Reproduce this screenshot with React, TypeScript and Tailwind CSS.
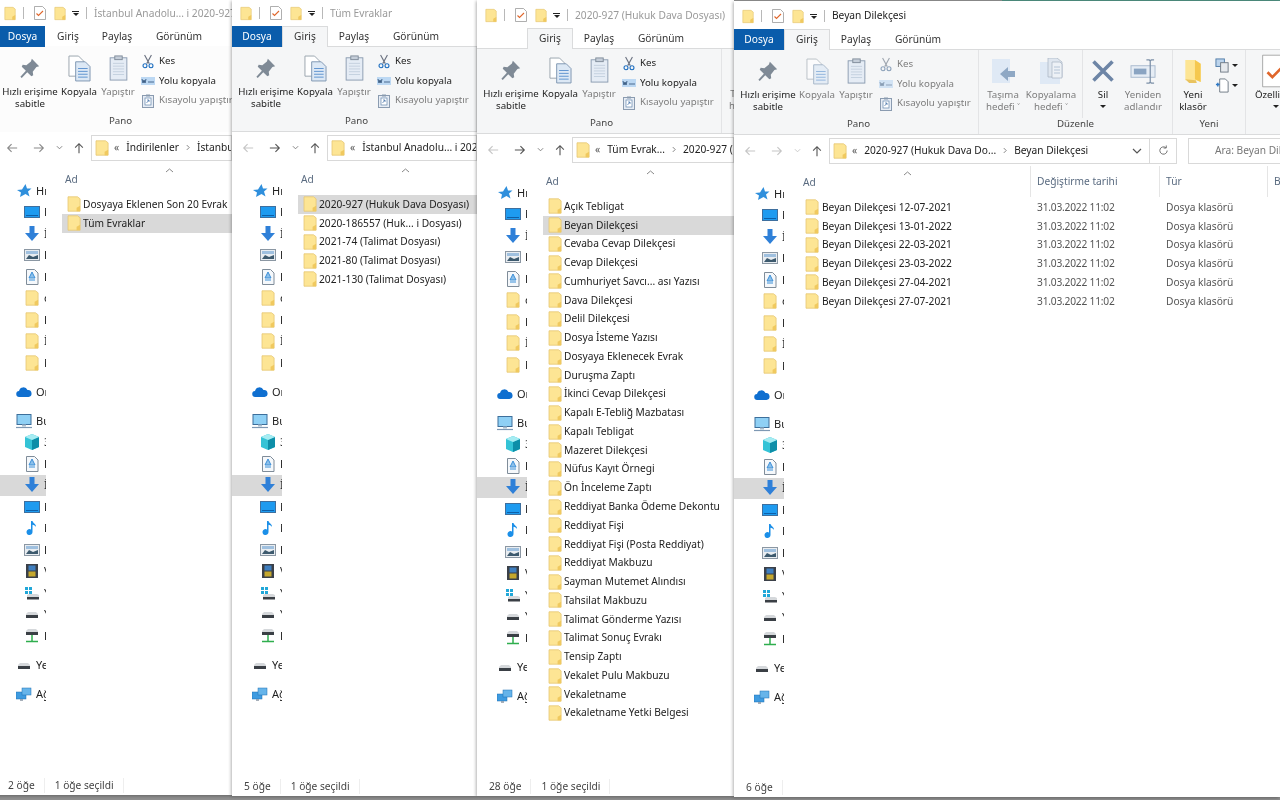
import type { ReactNode } from "react";

const font = { fontFamily: '"Noto Sans", "Open Sans", sans-serif' };

function Folder({ className = "w-[14px] h-[16px]" }: { className?: string }) {
  return (
    <svg viewBox="0 0 14 16" className={`shrink-0 ${className}`}>
      <path d="M1 .8h9.500l2.600 2v12.400H1z" fill="#fde594" stroke="#e6c774" strokeWidth=".8" />
      <path d="M9.600 15.200v-3.400l3.500-2v5.400z" fill="#f0c95f" />
    </svg>
  );
}

function Pin() {
  return (
    <svg viewBox="0 0 24 24" className="w-[22px] h-[22px]">
      <path d="M14 2l8 8-3 1-4 5 .5 4-2 1-4.500-4.500L3 23l-1.500-1.500L7.500 15 3 10.500l1-2 4 .5 5-4z" fill="#7f8a96" />
    </svg>
  );
}

function CopyIcon({ on }: { on: boolean }) {
  return (
    <svg viewBox="0 0 24 28" className="w-[23px] h-[27px]" opacity={on ? 1 : 0.65}>
      <path d="M1 1h10l5 5v16H1z" fill="#fff" stroke="#9aa4ad" />
      <path d="M8 7h10l5 5v15H8z" fill="#dce8f5" stroke="#7f97b2" />
      <path d="M10.500 14h10M10.500 17h10M10.500 20h10M10.500 23h10" stroke="#5d92cf" />
    </svg>
  );
}

function PasteIcon() {
  return (
    <svg viewBox="0 0 20 28" className="w-[19px] h-[26px]">
      <rect x="1" y="3" width="18" height="24" fill="#e5ecf5" stroke="#8a9bb0" />
      <rect x="6" y="1" width="8" height="4" fill="#c5ced9" stroke="#7f8b99" />
      <path d="M4 9h12M4 12h12M4 15h12M4 18h12M4 21h12" stroke="#c3cfdd" />
    </svg>
  );
}

function Scissors({ on }: { on: boolean }) {
  const c = on ? "#1f6fc0" : "#8da2ba";
  return (
    <svg viewBox="0 0 14 17" className="w-[12px] h-[15px] shrink-0">
      <path d="M3 1l5.500 10M11 1L5.500 11" stroke={on ? "#6b7280" : "#a0a7b0"} strokeWidth="1.300" fill="none" />
      <circle cx="3.500" cy="13.500" r="2.300" stroke={c} strokeWidth="1.300" fill="none" />
      <circle cx="10.500" cy="13.500" r="2.300" stroke={c} strokeWidth="1.300" fill="none" />
    </svg>
  );
}

function PathIcon({ on }: { on: boolean }) {
  return (
    <svg viewBox="0 0 14 8" className="w-[14px] h-[8px] shrink-0" opacity={on ? 1 : 0.6}>
      <rect width="14" height="8" fill="#bcd8f3" />
      <path d="M1 2l1 4 1-3 1 3 1-4" stroke="#24466f" strokeWidth=".8" fill="none" />
      <path d="M7 5h6" stroke="#4a6a90" />
    </svg>
  );
}

function ShortcutIcon() {
  return (
    <svg viewBox="0 0 12 14" className="w-[12px] h-[14px] shrink-0">
      <rect x=".5" y="1.500" width="11" height="12" fill="#e7edf5" stroke="#8a9bb0" />
      <rect x="3" y="4" width="6" height="7" fill="#fff" stroke="#6486ad" strokeWidth=".7" />
      <path d="M4.500 9l2.500-3M5 6h2v2" stroke="#3d6da8" strokeWidth=".7" fill="none" />
      <rect x="4" y=".5" width="4" height="2" fill="#8a9bb0" />
    </svg>
  );
}

function MoveIcon() {
  return (
    <svg viewBox="0 0 24 27" className="w-[24px] h-[27px]">
      <path d="M1 1h18v24H1z" fill="#dfe9f5" />
      <path d="M9 16l8-7v4h7v6h-7v4z" fill="#8fa8c4" />
    </svg>
  );
}

function CopyToIcon() {
  return (
    <svg viewBox="0 0 24 27" className="w-[24px] h-[27px]">
      <path d="M1 4h20v22H1z" fill="#dfe9f5" />
      <path d="M9 0h9l5 4v15H9z" fill="#dfe6ef" stroke="#a6b3c2" strokeWidth=".7" />
      <path d="M13 4h8l2 2v14H13z" fill="#edf1f6" stroke="#a6b3c2" strokeWidth=".7" />
      <path d="M15 9h6M15 12h6M15 15h6" stroke="#b5c4d6" />
    </svg>
  );
}

function DeleteIcon() {
  return (
    <svg viewBox="0 0 24 24" className="w-[24px] h-[24px]">
      <path d="M2.500 2.500l19 19M21.500 2.500l-19 19" stroke="#6d85a6" strokeWidth="3.600" />
    </svg>
  );
}

function RenameIcon() {
  return (
    <svg viewBox="0 0 28 26" className="w-[27px] h-[25px]">
      <rect x="1" y="7" width="25" height="12" fill="#e6edf5" stroke="#a9bace" />
      <rect x="4" y="10" width="13" height="6" fill="#8aa4c2" />
      <path d="M17 1h3l1 1 1-1h3M21 2v22M17 25h3l1-1 1 1h3" stroke="#7c90a8" strokeWidth="1.300" fill="none" />
    </svg>
  );
}

function NewFolderIcon() {
  return (
    <svg viewBox="0 0 18 26" className="w-[18px] h-[25px]">
      <path d="M1 1h10l6 4v19l-5-2-11 0z" fill="#fde594" />
      <path d="M11 1l6 4v19l-6-3z" fill="#f5c84f" />
      <path d="M1 21l4 4h8l-1-3z" fill="#e9c35f" />
    </svg>
  );
}

function Caret() {
  return <span className="block w-0 h-0 border-x-[3px] border-x-transparent border-t-[3px] border-t-[#222]" />;
}

function SmallNew({ doc }: { doc?: boolean }) {
  return (
    <span className="flex items-center gap-[2px]">
      <svg viewBox="0 0 16 16" className="w-[15px] h-[15px]">
        {doc ? (
          <>
            <path d="M5 1h6l3 3v11H5z" fill="#fff" stroke="#6f7a85" />
            <path d="M1 7h4M3 5v4" stroke="#2f78c4" strokeWidth="1.500" />
          </>
        ) : (
          <>
            <rect x="1" y="1" width="9" height="8" fill="#bcd4ec" stroke="#4f7ba8" />
            <rect x="6" y="5" width="8" height="10" fill="#e6e9ed" stroke="#6f7a85" />
          </>
        )}
      </svg>
      <Caret />
    </span>
  );
}

function CheckDoc({ small }: { small?: boolean }) {
  return (
    <svg viewBox="0 0 12 14" className={`shrink-0 ${small ? "w-[12px] h-[14px]" : "w-[30px] h-[34px]"}`}>
      <path d="M.5.5h8l3 3v10H.5z" fill="#fff" stroke="#8c8c8c" strokeWidth={small ? 0.7 : 0.3} />
      <path d="M2.500 7.500l2 2 4.500-4.500" stroke="#e0662b" strokeWidth="1.100" fill="none" />
    </svg>
  );
}

function Arrow({ dir, color }: { dir: "left" | "right" | "up"; color: string }) {
  const rot = dir === "left" ? "" : dir === "right" ? "rotate-180" : "rotate-90";
  return (
    <svg viewBox="0 0 14 12" className={`w-[13px] h-[12px] ${rot}`}>
      <path d="M13 6H2M6.500 1.500L2 6l4.500 4.500" stroke={color} strokeWidth="1.300" fill="none" />
    </svg>
  );
}

type Nav = "star" | "desktop" | "down" | "pics" | "doc" | "folder" | "cloud" | "pc" | "cube" | "music" | "video" | "win" | "drive" | "netdrive" | "net";

function NavIcon({ kind }: { kind: Nav }) {
  if (kind === "folder") return <Folder />;
  return (
    <svg viewBox="0 0 16 16" className="w-[16px] h-[16px]">
      {kind === "star" && <path d="M9.500 1l1.500 4.500h4.500l-3.500 3 1.500 5-4-2.500L4 14l1-4.500L1 7l5-.5z" fill="#2f8fdc" />}
      {kind === "desktop" && (
        <>
          <rect x=".5" y="2.500" width="15" height="11" fill="#1e9bf0" stroke="#3e6f9e" />
          <path d="M2 11.500h12" stroke="#0d5fa8" />
        </>
      )}
      {kind === "down" && <path d="M5.500 0h5v7H15l-7 8-7-8h4.500z" fill="#2f80d8" />}
      {kind === "pics" && (
        <>
          <rect x=".5" y="2.500" width="15" height="11" fill="#e9edf1" stroke="#8b97a3" />
          <rect x="2" y="4" width="12" height="3" fill="#9fc0df" />
          <path d="M2 12l3-4 4 2 5-2v4z" fill="#3d5a6e" />
        </>
      )}
      {kind === "doc" && (
        <>
          <path d="M2.500.5h8l3.500 3.500v11.500H2.500z" fill="#f5f8fb" stroke="#7f8c99" />
          <path d="M8 3L5 9h6zM5 11h6" stroke="#3b8fd8" fill="#8cc0ea" />
        </>
      )}
      {kind === "cloud" && <path d="M3.500 13a3 3 0 01-.5-6 4.500 4.500 0 018.500-1 3.500 3.500 0 011 7z" fill="#0f6fd0" />}
      {kind === "pc" && (
        <>
          <rect x="1" y="1.500" width="14" height="10" fill="#8fd0f5" stroke="#3d6f9b" />
          <path d="M0 14.500h16" stroke="#7e98b3" strokeWidth="1.200" />
          <path d="M6 11.500h4v2H6z" fill="#a9bccd" />
        </>
      )}
      {kind === "cube" && (
        <>
          <path d="M8 0l7 3v10l-7 3-7-3V3z" fill="#34c3d6" />
          <path d="M8 6l7-3v10l-7 3z" fill="#0d8ea8" />
          <path d="M8 6L1 3l7-3 7 3z" fill="#a6ecf2" />
        </>
      )}
      {kind === "music" && <path d="M7 1h1.500c.5 2.500 4 3 3.500 6-.8-1.500-2-2-3.500-2.300V12a3 3 0 11-1.500-2.500z" fill="#1b8fe8" />}
      {kind === "video" && (
        <>
          <rect x="2" y="1" width="12" height="14" fill="#3b4048" />
          <rect x="4.500" y="2.500" width="7" height="5" fill="#3f7fc0" />
          <rect x="4.500" y="8.500" width="7" height="5" fill="#c5a82e" />
        </>
      )}
      {kind === "win" && (
        <>
          <path d="M1 2h3v3H1zM5 2h3v3H5zM1 6h3v3H1zM5 6h3v3H5z" fill="#21a7d8" />
          <path d="M3 10l2-1h8l2 1v4H3z" fill="#d5d8db" />
          <rect x="3" y="12" width="12" height="2.500" fill="#3a3f45" />
        </>
      )}
      {kind === "drive" && (
        <>
          <path d="M2 8l2-2h8l2 2v3H2z" fill="#d5d8db" />
          <rect x="2" y="9" width="12" height="3" fill="#3a3f45" />
        </>
      )}
      {kind === "netdrive" && (
        <>
          <path d="M2 3l2-2h8l2 2v3H2z" fill="#d5d8db" />
          <rect x="2" y="4" width="12" height="3" fill="#3a3f45" />
          <path d="M8 7v6M2 13.500h12" stroke="#2fae4e" strokeWidth="1.500" />
        </>
      )}
      {kind === "net" && (
        <>
          <rect x="0" y="6" width="10" height="7" fill="#3e9be0" stroke="#1f6fb3" strokeWidth=".5" />
          <rect x="6" y="2" width="9" height="7" fill="#66b4ea" stroke="#1f6fb3" strokeWidth=".5" />
          <path d="M4 14h3" stroke="#8a96a3" strokeWidth="1.500" />
        </>
      )}
    </svg>
  );
}

const navRows: { kind: Nav; label: string; top?: boolean; gap?: boolean; sel?: boolean }[] = [
  { kind: "star", label: "Hızlı", top: true },
  { kind: "desktop", label: "Masaüstü" },
  { kind: "down", label: "İndirilenler" },
  { kind: "pics", label: "Resimler" },
  { kind: "doc", label: "Belgeler" },
  { kind: "folder", label: "dosya" },
  { kind: "folder", label: "Dava" },
  { kind: "folder", label: "İcra" },
  { kind: "folder", label: "Notlar" },
  { kind: "cloud", label: "OneDrive", top: true, gap: true },
  { kind: "pc", label: "Bu bilgisayar", top: true, gap: true },
  { kind: "cube", label: "3B Nesneler" },
  { kind: "doc", label: "Belgeler" },
  { kind: "down", label: "İndirilenler", sel: true },
  { kind: "desktop", label: "Masaüstü" },
  { kind: "music", label: "Müzik" },
  { kind: "pics", label: "Resimler" },
  { kind: "video", label: "Videolar" },
  { kind: "win", label: "Yerel Disk" },
  { kind: "drive", label: "Yeni Birim" },
  { kind: "netdrive", label: "Evrak" },
  { kind: "drive", label: "Yeni Birim", top: true, gap: true },
  { kind: "net", label: "Ağ", top: true, gap: true },
];

function BigButton({ icon, lines, dim, caret }: { icon: ReactNode; lines: string[]; dim?: boolean; caret?: boolean }) {
  return (
    <div className={`w-full flex flex-col items-center text-center leading-[12px] ${dim ? "text-[#7d7d7d]" : "text-[#222]"}`}>
      <div className="h-[32px] mb-[2px] flex items-center justify-center">{icon}</div>
      {lines.map((l) => (
        <span key={l} className="whitespace-nowrap">{l}</span>
      ))}
      {caret && <span className="mt-[4px]"><Caret /></span>}
    </div>
  );
}

function SmallButton({ icon, label, dim }: { icon: ReactNode; label: string; dim?: boolean }) {
  return (
    <div className={`h-[19.500px] flex items-center gap-[4px] whitespace-nowrap ${dim ? "text-[#7d7d7d]" : "text-[#222]"}`}>
      <span className="w-[15px] flex justify-center shrink-0">{icon}</span>
      {label}
    </div>
  );
}

function Group({ label, className, children }: { label: string; className: string; children: ReactNode }) {
  return (
    <div className={`h-full shrink-0 flex flex-col border-r border-[#e3e4e6] ${className}`}>
      <div className="flex-1 flex min-h-0">{children}</div>
      <div className="h-[14px] mb-[3px] leading-[14px] text-center text-[#444]">{label}</div>
    </div>
  );
}

type Win = {
  place: string;
  pad: string;
  title: string;
  titleDim: boolean;
  dosya: boolean;
  dosyaWidth: string;
  tabStyle: string;
  ribbon: string;
  live: boolean;
  back: string;
  forward: string;
  crumbs: string[];
  rows: string[];
  selected: number;
  count: string;
  full?: boolean;
};

const beyan = ["12-07-2021", "13-01-2022", "22-03-2021", "23-03-2022", "27-04-2021", "27-07-2021"];

const windows: Win[] = [
  {
    place: "top-0 left-[-4px] w-[236px] h-[795px] z-10",
    pad: "pt-0",
    title: "İstanbul Anadolu... i 2020-927",
    titleDim: true,
    dosya: true,
    dosyaWidth: "ml-[4px] w-[45px]",
    tabStyle: "border-transparent bg-transparent",
    ribbon: "bg-[#fcfcfc] border-transparent",
    live: true,
    back: "#8a8a8a",
    forward: "#8a8a8a",
    crumbs: ["İndirilenler", "İstanbul Anadolu"],
    rows: ["Dosyaya Eklenen Son 20 Evrak", "Tüm Evraklar"],
    selected: 1,
    count: "2 öğe",
  },
  {
    place: "top-0 left-[232px] w-[245px] h-[796px] z-20",
    pad: "pt-0",
    title: "Tüm Evraklar",
    titleDim: true,
    dosya: true,
    dosyaWidth: "w-[50px]",
    tabStyle: "border-[#dadbdc] bg-[#f5f6f7]",
    ribbon: "bg-[#f5f6f7] border-[#dadbdc]",
    live: true,
    back: "#c5c5c5",
    forward: "#555",
    crumbs: ["İstanbul Anadolu... i 2020-927"],
    rows: ["2020-927 (Hukuk Dava Dosyası)", "2020-186557 (Huk... i Dosyası)", "2021-74 (Talimat Dosyası)", "2021-80 (Talimat Dosyası)", "2021-130 (Talimat Dosyası)"],
    selected: 0,
    count: "5 öğe",
  },
  {
    place: "top-0 left-[477px] w-[257px] h-[796px] z-30",
    pad: "pt-[2px]",
    title: "2020-927 (Hukuk Dava Dosyası)",
    titleDim: true,
    dosya: false,
    dosyaWidth: "w-[50px]",
    tabStyle: "border-[#dadbdc] bg-[#f5f6f7]",
    ribbon: "bg-[#f5f6f7] border-[#dadbdc]",
    live: true,
    back: "#c5c5c5",
    forward: "#555",
    crumbs: ["Tüm Evrak...", "2020-927 (Hukuk"],
    rows: [
      "Açık Tebligat", "Beyan Dilekçesi", "Cevaba Cevap Dilekçesi", "Cevap Dilekçesi", "Cumhuriyet Savcı... ası Yazısı",
      "Dava Dilekçesi", "Delil Dilekçesi", "Dosya İsteme Yazısı", "Dosyaya Eklenecek Evrak", "Duruşma Zaptı",
      "İkinci Cevap Dilekçesi", "Kapalı E-Tebliğ Mazbatası", "Kapalı Tebligat", "Mazeret Dilekçesi", "Nüfus Kayıt Örnegi",
      "Ön İnceleme Zaptı", "Reddiyat Banka Ödeme Dekontu", "Reddiyat Fişi", "Reddiyat Fişi (Posta Reddiyat)", "Reddiyat Makbuzu",
      "Sayman Mutemet Alındısı", "Tahsilat Makbuzu", "Talimat Gönderme Yazısı", "Talimat Sonuç Evrakı", "Tensip Zaptı",
      "Vekalet Pulu Makbuzu", "Vekaletname", "Vekaletname Yetki Belgesi",
    ],
    selected: 1,
    count: "28 öğe",
  },
  {
    place: "top-[1px] left-[734px] w-[546px] h-[796px] z-40",
    pad: "pt-[2px]",
    title: "Beyan Dilekçesi",
    titleDim: false,
    dosya: true,
    dosyaWidth: "w-[50px]",
    tabStyle: "border-[#dadbdc] bg-[#f5f6f7]",
    ribbon: "bg-[#f5f6f7] border-[#dadbdc]",
    live: false,
    back: "#c5c5c5",
    forward: "#c5c5c5",
    crumbs: ["2020-927 (Hukuk Dava Do...", "Beyan Dilekçesi"],
    rows: beyan.map((d) => `Beyan Dilekçesi ${d}`),
    selected: -1,
    count: "6 öğe",
    full: true,
  },
];

function ExplorerWindow({ w }: { w: Win }) {
  return (
    <div className={`absolute bg-white overflow-hidden flex flex-col text-[10.200px] shadow-[-1px_1px_3px_rgba(0,0,0,0.3)] ${w.place} ${w.pad}`}>
      {/* title bar */}
      <div className="h-[26px] shrink-0 flex items-center pl-[8px]">
        <Folder className="w-[12px] h-[15px]" />
        <span className="w-px h-[12px] bg-[#b8b8b8] shrink-0 ml-[7px] mr-[10px]" />
        <CheckDoc small />
        <span className="ml-[8px] shrink-0"><Folder className="w-[12px] h-[15px]" /></span>
        <span className="ml-[6px] shrink-0 flex flex-col items-center gap-[1px]">
          <span className="w-[7px] h-px bg-[#222]" />
          <Caret />
        </span>
        <span className="w-px h-[12px] bg-[#b8b8b8] shrink-0 ml-[7px] mr-[7px]" />
        <span className={`whitespace-nowrap ${w.titleDim ? "text-[#9a9a9a] pt-[1px]" : "text-[#222]"}`}>{w.title}</span>
      </div>
      {/* tabs */}
      <div className="h-[21px] shrink-0 flex text-[#333] relative z-10 -mb-px">
        <div className={`${w.dosyaWidth} flex items-center justify-center ${w.dosya ? "bg-[#0a5cab] text-white" : "text-white"}`}>Dosya</div>
        <div className={`w-[46px] flex items-center justify-center border border-b-0 ${w.tabStyle}`}>Giriş</div>
        <div className="w-[52px] flex items-center justify-center">Paylaş</div>
        <div className="w-[72px] flex items-center justify-center">Görünüm</div>
      </div>
      {/* ribbon */}
      <div className={`h-[86px] shrink-0 flex overflow-hidden border-t border-b text-[9.700px] ${w.ribbon}`}>
        <Group label="Pano" className="w-[245px] pl-[5px]">
          <div className="w-[58px] pt-[5px]"><BigButton icon={<Pin />} lines={["Hızlı erişime", "sabitle"]} /></div>
          <div className="w-[40px] pt-[5px]"><BigButton icon={<CopyIcon on={w.live} />} lines={["Kopyala"]} dim={!w.live} /></div>
          <div className="w-[38px] pt-[5px]"><BigButton icon={<PasteIcon />} lines={["Yapıştır"]} dim /></div>
          <div className="pl-[3px] pt-[5px] flex flex-col">
            <SmallButton icon={<Scissors on={w.live} />} label="Kes" dim={!w.live} />
            <SmallButton icon={<PathIcon on={w.live} />} label="Yolu kopyala" dim={!w.live} />
            <SmallButton icon={<ShortcutIcon />} label="Kısayolu yapıştır" dim />
          </div>
        </Group>
        <Group label="Düzenle" className="w-[194px]">
          <div className="w-[48px] pt-[5px]"><BigButton icon={<MoveIcon />} lines={["Taşıma", "hedefi ˅"]} dim /></div>
          <div className="w-[48px] pt-[5px]"><BigButton icon={<CopyToIcon />} lines={["Kopyalama", "hedefi ˅"]} dim /></div>
          <div className="w-[8px] border-r border-[#e3e4e6] h-[68px]" />
          <div className="w-[40px] pt-[5px]"><BigButton icon={<DeleteIcon />} lines={["Sil"]} caret /></div>
          <div className="w-[40px] pt-[5px]"><BigButton icon={<RenameIcon />} lines={["Yeniden", "adlandır"]} dim /></div>
        </Group>
        <Group label="Yeni" className="w-[73px]">
          <div className="w-[40px] pt-[5px]"><BigButton icon={<NewFolderIcon />} lines={["Yeni", "klasör"]} /></div>
          <div className="pt-[8px] pl-[2px] flex flex-col gap-[5px]">
            <SmallNew />
            <SmallNew doc />
          </div>
        </Group>
        <div className="w-[60px] shrink-0 pt-[5px]"><BigButton icon={<CheckDoc />} lines={["Özellikler"]} caret /></div>
      </div>
      {/* nav */}
      <div className="h-[31px] shrink-0 flex items-center">
        <div className="w-[95px] shrink-0 flex items-center">
          <span className="ml-[10px] w-[12px] flex justify-center"><Arrow dir="left" color={w.back} /></span>
          <span className="ml-[15px] w-[12px] flex justify-center"><Arrow dir="right" color={w.forward} /></span>
          <svg viewBox="0 0 8 5" className="ml-[11px] w-[7px] h-[5px]"><path d="M1 1l3 3 3-3" stroke={w.full ? "#c5c5c5" : "#777"} fill="none" /></svg>
          <span className="ml-[10px] w-[12px] flex justify-center"><Arrow dir="up" color="#555" /></span>
        </div>
        <div className={`h-[26px] border border-[#d9d9d9] flex items-center overflow-hidden min-w-0 ${w.full ? "w-[321px] shrink-0" : "flex-1"}`}>
          <span className="ml-[3px] shrink-0"><Folder /></span>
          <span className="ml-[5px] text-[#555] shrink-0">«</span>
          {w.crumbs.map((c, i) => (
            <span key={c} className="flex items-center shrink-0">
              {i > 0 && (
                <svg viewBox="0 0 5 8" className="mx-[7px] w-[4px] h-[7px]"><path d="M1 1l3 3-3 3" stroke="#666" fill="none" /></svg>
              )}
              <span className={`text-[#222] whitespace-nowrap ${i === 0 ? "ml-[7px]" : ""}`}>{c}</span>
            </span>
          ))}
          {w.full && (
            <svg viewBox="0 0 10 6" className="ml-auto mr-[7px] w-[10px] h-[6px]"><path d="M1 1l4 4 4-4" stroke="#555" strokeWidth="1.200" fill="none" /></svg>
          )}
        </div>
        {w.full && (
          <>
            <div className="w-[27px] h-[26px] shrink-0 border border-l-0 border-[#d9d9d9] flex items-center justify-center">
              <svg viewBox="0 0 12 12" className="w-[11px] h-[11px]"><path d="M10 6a4 4 0 11-1.500-3.100M9 .5v2.800H6.200" stroke="#666" fill="none" /></svg>
            </div>
            <div className="ml-[11px] flex-1 h-[26px] border border-r-0 border-[#d9d9d9] flex items-center text-[#777] whitespace-nowrap overflow-hidden">
              <svg viewBox="0 0 12 12" className="ml-[17px] w-[12px] h-[12px]"><circle cx="7.500" cy="4.500" r="3.500" stroke="#888" fill="none" /><path d="M5 7l-4 4" stroke="#888" /></svg>
              <span className="ml-[9px]">Ara: Beyan Dilekçesi</span>
            </div>
          </>
        )}
      </div>
      {/* body */}
      <div className="flex-1 min-h-0 flex">
        <div className="w-[50px] shrink-0 pt-[17px] overflow-hidden">
          {navRows.map((r, i) => (
            <div key={i} className={`h-[21.500px] flex items-center whitespace-nowrap text-[#222] text-[11px] ${r.gap ? "mt-[7.500px]" : ""} ${r.sel ? "bg-[#d9d9d9]" : ""} ${r.top ? "pl-[20px]" : "pl-[28px]"}`}>
              <span className="w-[16px] flex justify-center shrink-0"><NavIcon kind={r.kind} /></span>
              <span className="ml-[4px]">{r.label}</span>
            </div>
          ))}
        </div>
        <div className="flex-1 min-w-0 flex flex-col">
          <div className="flex h-[31px] shrink-0 text-[#5a6b80]">
            <div className="w-[246px] shrink-0 pt-[1px] flex flex-col">
              <div className="h-[9px] flex justify-center items-end">
                <svg viewBox="0 0 9 5" className="w-[9px] h-[5px]"><path d="M1 4l3.500-3L8 4" stroke="#888" fill="none" /></svg>
              </div>
              <div className="h-[14px] pl-[19px] flex items-center">Ad</div>
            </div>
            {w.full && (
              <>
                <div className="w-[129px] shrink-0 border-l border-[#e5e5e5] pl-[6px] flex items-center">Değiştirme tarihi</div>
                <div className="w-[108px] shrink-0 border-l border-[#e5e5e5] pl-[6px] flex items-center">Tür</div>
                <div className="flex-1 border-l border-[#e5e5e5] pl-[6px] flex items-center">B</div>
              </>
            )}
          </div>
          <div className="pt-[1px]">
            {w.rows.map((name, i) => (
              <div key={name} className={`h-[18.780px] ml-[16px] flex items-center whitespace-nowrap text-[#222] ${i === w.selected ? "bg-[#d9d9d9]" : ""}`}>
                <span className="ml-[5px] shrink-0"><Folder /></span>
                <span className={w.full ? "ml-[3px] w-[215px]" : "ml-[2px]"}>{name}</span>
                {w.full && <span className="w-[129px] text-[#555] tracking-[-0.200px]">31.03.2022 11:02</span>}
                {w.full && <span className="text-[#555]">Dosya klasörü</span>}
              </div>
            ))}
          </div>
        </div>
      </div>
      {/* status */}
      <div className="h-[22px] shrink-0 pl-[12px] pt-[3px] flex items-center text-[#444]">
        <span className="pr-[9px] border-r border-[#eeeeee]">{w.count}</span>
        {w.selected >= 0 && <span className="ml-[10px] pr-[9px] border-r border-[#eeeeee]">1 öğe seçildi</span>}
      </div>
    </div>
  );
}

export default function App() {
  return (
    <div className="relative w-[1280px] h-[800px] overflow-hidden bg-[#8f8f8f] blur-[0.3px]" style={font}>
      <div className="absolute top-0 left-[1002px] w-[278px] h-px bg-[#4f8f80]" />
      {windows.map((w) => (
        <ExplorerWindow key={w.title} w={w} />
      ))}
    </div>
  );
}
